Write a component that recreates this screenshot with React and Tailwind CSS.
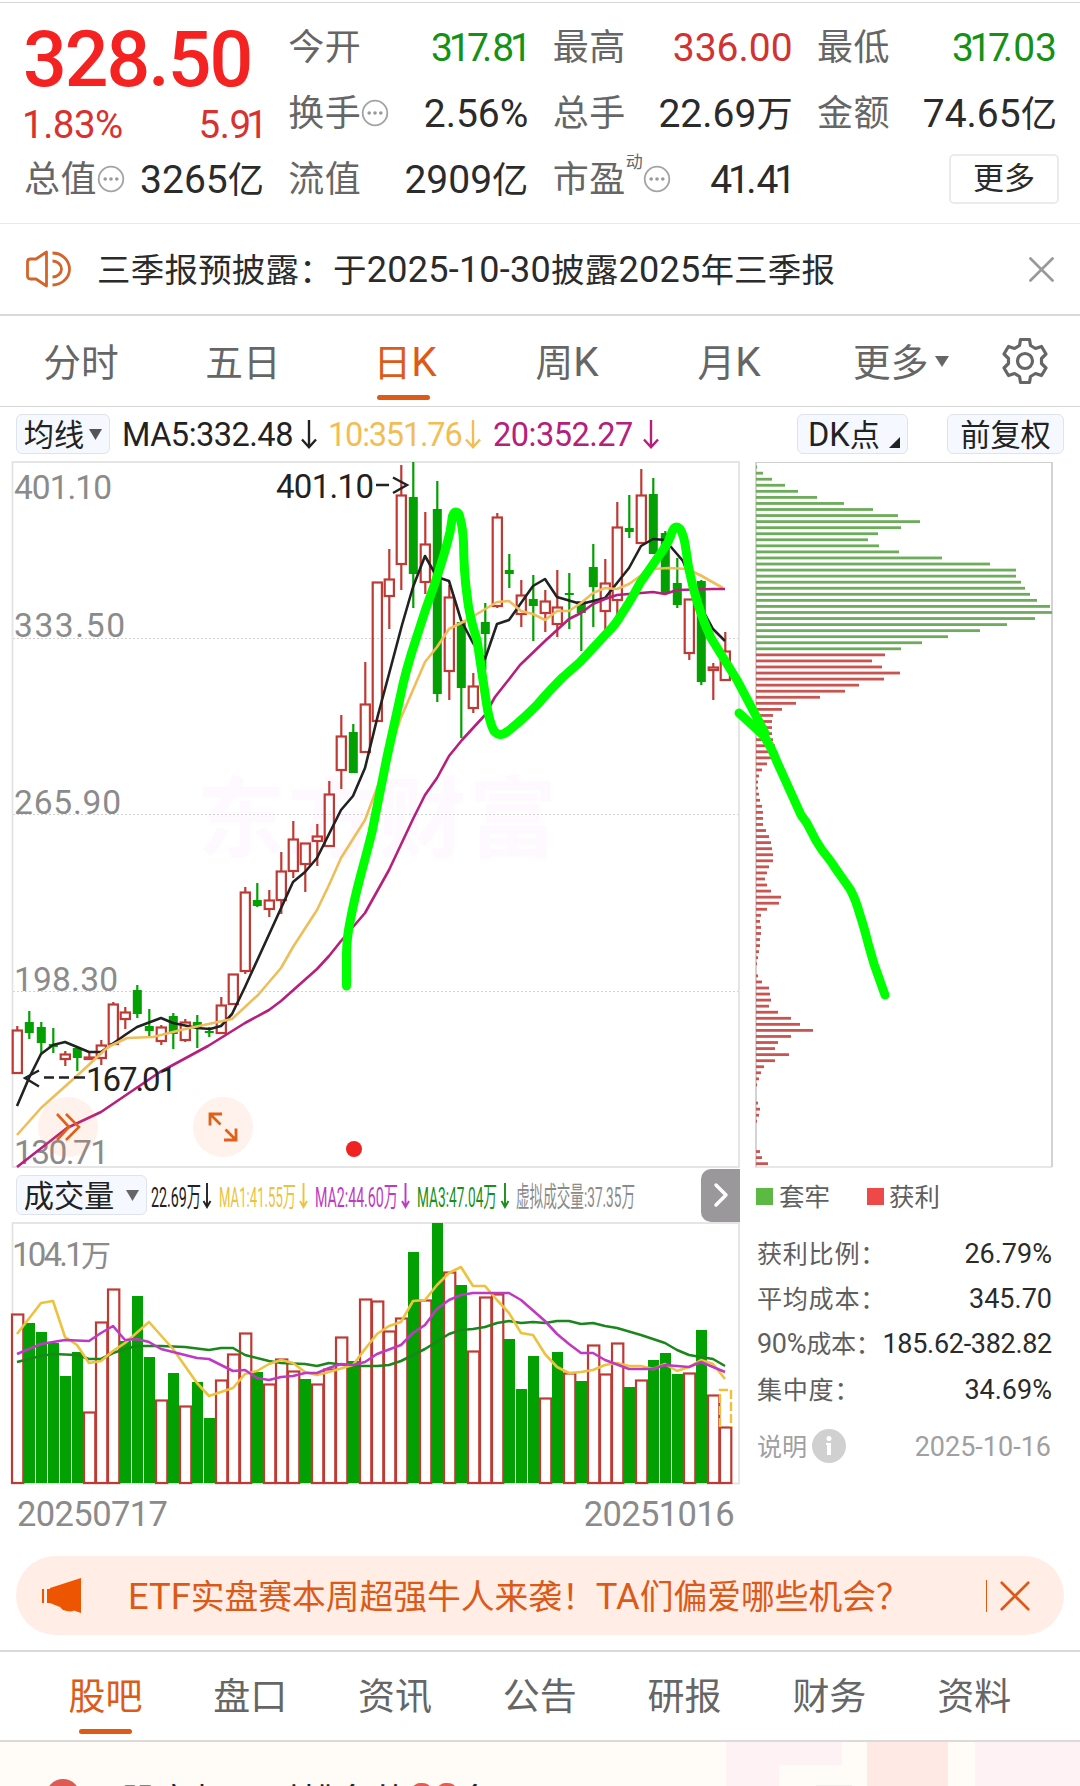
const UP = '#bf3a35'
const DOWN = '#03a003'

// direction, body top, body bottom, high, low
const candles = [
['r',1030,1073,1026,1073],['g',1022,1033,1011,1039],['g',1027,1043,1022,1053],['g',1044,1047,1028,1053],['r',1054,1059,1051,1066],
['g',1048,1058,1048,1071],['r',1057,1059,1052,1059],['r',1045,1058,1040,1065],['r',1004,1044,1002,1044],['r',1012,1019,1007,1029],
['g',990,1014,985,1018],['g',1026,1031,1009,1036],['r',1027,1041,1025,1045],['g',1016,1034,1013,1049],['r',1022,1040,1019,1042],
['g',1022,1027,1015,1048],['g',1031,1033,1027,1037],['r',1005,1033,997,1033],['r',974,1004,974,1004],['r',892,971,887,974],
['g',900,906,883,907],['r',900,909,890,917],['r',871,900,852,914],['r',839,871,821,878],['r',843,864,843,892],
['r',836,841,824,866],['r',794,846,781,846],['r',736,770,715,789],['g',732,773,724,773],['r',704,752,662,752],
['r',582,721,582,721],['r',579,596,549,629],['r',495,564,465,590],['g',497,574,462,608],['r',544,582,512,594],
['g',509,694,481,702],['r',597,671,585,700],['g',622,688,622,738],['r',686,708,673,713],['g',622,634,603,670],
['r',517,606,513,608],['g',570,574,554,588],['r',595,614,580,627],['g',599,606,575,641],['r',601,613,590,632],
['r',607,624,570,637],['g',593,595,573,629],['g',601,613,601,651],['g',567,587,544,627],['r',583,611,559,630],
['r',527,600,502,617],['g',528,532,495,538],['r',495,543,469,543],['g',494,554,478,554],['g',533,593,531,593],
['g',583,605,558,608],['r',599,653,599,660],['g',581,682,580,685],['r',667,670,663,700],['r',651,680,632,681],
]

const volumes = [
1314,1323,1332,1343,1376,1352,1412,1322,1289,1341,1296,1357,1400,1373,1406,1382,1418,1380,1354,1333,
1372,1384,1359,1371,1379,1384,1369,1337,1361,1299,1301,1331,1318,1252,1300,1223,1272,1285,1351,1297,
1294,1339,1389,1356,1398,1352,1373,1381,1345,1374,1343,1387,1380,1360,1353,1374,1373,1330,1395,1427,
]
const falling = new Set([1, 2, 3, 4, 5, 9, 10, 11, 13, 15, 16, 20, 24, 28, 33, 35, 37, 41, 42, 43, 45, 47, 51, 53, 54, 55, 57])

// cost distribution, one value per price level; the first 31 are trapped chips
const chips = [
1,7,16,29,42,61,88,117,142,164,145,122,112,123,143,186,234,260,260,265,269,274,281,294,296,279,251,224,192,166,145,
129,116,126,144,128,103,89,64,40,26,17,16,16,16,17,19,20,16,11,6,3,2,2,3,4,6,7,7,7,10,13,15,16,17,17,13,11,9,11,15,25,23,11,
5,4,5,5,4,4,3,2,1,0,2,6,13,14,15,13,22,35,44,57,35,22,19,33,19,8,5,3,1,0,0,2,4,3,1,0,0,0,0,4,6,12,
]

const ma5 = '17,1106 29,1078 41,1054 53,1045 65,1042 89,1052 101,1052 125,1035 137,1027 161,1018 173,1023 197,1028 210,1029 221,1026 232,1014 245,987 293,882 305,872 317,858 341,810 353,796 365,768 378,715 389,674 402,625 413,587 425,556 437,577 449,581 461,620 473,643 485,659 497,624 509,620 533,586 545,579 557,597 581,604 605,598 629,568 641,546 653,539 665,540 683,561 701,607 713,629 725,641'
const ma10 = '17,1135 41,1108 80,1073 108,1047 127,1038 153,1037 185,1029 232,1019 258,995 281,968 293,947 317,910 329,885 341,858 365,820 380,780 400,720 425,662 437,647 449,629 467,620 497,602 509,601 521,611 533,614 545,620 557,611 569,611 581,603 593,593 605,588 617,589 629,584 643,574 653,569 668,568 687,569 700,575 723,588'
const ma20 = '17,1167 67,1128 101,1112 160,1072 208,1046 245,1023 269,1010 281,1001 317,969 329,956 341,941 365,913 389,870 413,819 425,795 437,778 449,756 462,740 485,715 495,697 510,678 520,665 545,641 557,630 569,619 581,613 593,604 605,599 617,595 641,593 653,592 665,594 677,590 713,589 725,589'

const vol1 = '17,1334 41,1303 53,1301 65,1337 77,1345 89,1363 101,1361 113,1351 125,1343 149,1322 173,1349 185,1366 197,1383 209,1396 221,1392 233,1388 245,1374 257,1371 269,1364 281,1360 293,1363 305,1372 317,1375 329,1372 353,1365 365,1349 377,1334 389,1326 401,1322 413,1301 425,1300 437,1285 449,1273 461,1267 473,1286 485,1286 497,1300 509,1313 521,1333 533,1335 545,1354 557,1367 569,1373 581,1372 593,1370 605,1365 617,1363 629,1366 641,1366 653,1369 665,1364 677,1371 689,1367 701,1360 713,1364 725,1379'
const vol2 = '17,1354 41,1344 65,1340 89,1341 101,1333 113,1326 125,1340 137,1339 149,1342 161,1349 197,1358 209,1359 221,1365 233,1371 245,1370 257,1378 269,1380 281,1377 293,1376 305,1373 317,1373 329,1368 341,1364 353,1365 365,1362 377,1354 401,1345 413,1333 425,1325 437,1309 449,1300 461,1295 473,1293 509,1293 521,1300 545,1321 557,1334 569,1344 581,1353 593,1353 605,1360 629,1369 653,1369 665,1365 689,1367 701,1362 725,1372'
const vol3 = '17,1362 41,1356 53,1354 77,1355 89,1359 101,1359 113,1353 125,1349 137,1346 161,1346 185,1347 209,1350 221,1348 233,1348 245,1355 269,1361 281,1363 305,1364 317,1366 329,1363 353,1366 377,1366 389,1365 401,1361 425,1349 449,1334 461,1330 473,1329 485,1327 497,1323 509,1321 521,1323 533,1322 545,1323 557,1321 569,1321 581,1324 593,1323 605,1326 617,1328 641,1335 653,1339 665,1343 677,1350 689,1355 701,1357 713,1359 725,1366'

const cx = i => 17.3 + i * 12

// digits stand taller than the hanzi beside them
function Mix({ children }) {
return children.split(/([\u3000-\u9fff\uff00-\uffef]+)/).map((s, i) => i % 2 ? <span key={i} className="text-[0.93em]">{s}</span> : s)
}

// proportional figures: a narrow 1, and a point tucked under the 7
function Num({ children }) {
return children.split(/(1|7(?=\.)|[\u3000-\u9fff]+)/).map((s, i) => {
if (s === '1') return <span key={i} className="-mr-[0.09em] -ml-[0.11em]">1</span>
if (s === '7') return <span key={i} className="-mr-[0.18em]">7</span>
return i % 2 ? <span key={i} className="text-[0.93em]">{s}</span> : s
})
}

function Dots() {
return (
<svg width="28" height="28" viewBox="0 0 28 28" fill="none" className="shrink-0">
<circle cx="14" cy="14" r="12.3" stroke="#a3a3a3" strokeWidth="1.8" />
<circle cx="8.2" cy="14" r="1.8" fill="#999" /><circle cx="14" cy="14" r="1.8" fill="#999" /><circle cx="19.8" cy="14" r="1.8" fill="#999" />
</svg>
)
}

function Stat({ label, value, dots, sup, color = 'text-[#2b2b2b]' }) {
return (
<div className="flex h-[66px] items-center justify-between">
<div className="flex items-center">
<span className="pt-[2px] text-[36px] tracking-[0.5px] text-[#666]">{label}</span>
{sup && <span className="-mt-[32px] text-[17px] text-[#666]">{sup}</span>}
{dots && <Dots />}
</div>
<span className={'pt-[2px] text-[39px] ' + color}><Num>{value}</Num></span>
</div>
)
}

function Close({ size, color, width }) {
return (
<svg width={size} height={size} viewBox="0 0 26 26" stroke={color} strokeWidth={width} strokeLinecap="round">
<path d="M1.5 1.5 24.5 24.5M24.5 1.5 1.5 24.5" />
</svg>
)
}

function Down() {
return (
<svg width="16" height="29" viewBox="0 0 16 29" fill="none" stroke="currentColor" strokeWidth="2.4" className="shrink-0">
<path d="M8 0V27M1 19.5 8 27.2 15 19.5" />
</svg>
)
}

function Header() {
return (
<section className="flex h-[221px] justify-between border-b border-[#e9e9e9] pr-[23px] pl-[24px] pt-[11px]">
<div className="w-[240px]">
<div className="-ml-[1px] h-[77px] pt-[8px] text-[77px] leading-[77px] font-medium tracking-[-2px] text-[#f52222]">328.50</div>
<div className="-ml-[2px] flex h-[55px] items-end justify-between text-[38.5px] leading-[43px] tracking-[-0.5px] text-[#d93030]"><span>1.83%</span><span><Num>5.91</Num></span></div>
<Stat label="总值" dots value="3265亿" />
</div>
<div className="w-[240px]">
<Stat label="今开" value="317.81" color="text-[#159215]" />
<Stat label="换手" dots value="2.56%" />
<Stat label="流值" value="2909亿" />
</div>
<div className="w-[240px]">
<Stat label="最高" value="336.00" color="text-[#d23232]" />
<Stat label="总手" value="22.69万" />
<Stat label="市盈" sup="动" dots value="41.41" />
</div>
<div className="w-[240px]">
<Stat label="最低" value="317.03" color="text-[#159215]" />
<Stat label="金额" value="74.65亿" />
<div className="flex h-[66px] items-center justify-end">
<button className="-mr-[2px] flex h-[50px] w-[110px] items-center justify-center rounded-[5px] border-2 border-[#ebebeb] text-[31px] text-[#2b2b2b]">更多</button>
</div>
</div>
</section>
)
}

function Notice() {
return (
<section className="flex h-[92px] items-center border-b-2 border-[#dadada] pr-[26px] pl-[25px]">
<svg width="46" height="38" viewBox="0 0 46 38" fill="none" stroke="#d4652a" strokeWidth="2.8" strokeLinejoin="round">
<path d="M2.5 12Q2.5 9 5.5 9H11L21.5 2V36L11 29H5.5Q2.5 29 2.5 26Z" />
<path d="M27.500 3A17 16 0 0 1 27.500 35M27.500 11A9 8 0 0 1 27.500 27" />
</svg>
<span className="ml-[26px] flex-1 pt-[2px] text-[36px] tracking-[0.250px] whitespace-nowrap text-[#2b2b2b]"><Mix>三季报预披露：于2025-10-30披露2025年三季报</Mix></span>
<Close size={25} color="#999" width="2.8" />
</section>
)
}

function Gear() {
return (
<svg width="46" height="48" viewBox="0 0 46 48" fill="none" stroke="#666" strokeWidth="3.2" strokeLinejoin="round">
<path d="M18.500 2.500H27.500L28.500 8.500L33.500 11.500L39.500 9.500L44 17L39.500 21.500V26.500L44 31L39.500 38.500L33.500 36.500L28.500 39.500L27.500 45.500H18.500L17.500 39.500L12.500 36.500L6.500 38.500L2 31L6.500 26.500V21.500L2 17L6.500 9.500L12.500 11.500L17.500 8.500Z" />
<circle cx="23" cy="24" r="7.500" />
</svg>
)
}

function Tabs() {
return (
<nav className="flex h-[91px] items-center border-b border-[#d6d6d6] text-[40.500px] text-[#666]">
{['分时', '五日', '日K', '周K', '月K'].map(t => (
<div key={t} className={t === '日K' ? 'relative flex h-full w-[162px] items-center justify-center text-[#dc5b17]' : 'flex h-full w-[162px] items-center justify-center'}>
<span className="pt-[3px]"><Mix>{t}</Mix></span>
{t === '日K' && <i className="absolute bottom-[6px] left-[53px] h-[5px] w-[53px] rounded-full bg-[#dc5b17]" />}
</div>
))}
<div className="ml-[43px] flex items-center gap-[7px]"><span className="pt-[3px]"><Mix>更多</Mix></span><svg width="14" height="11"><path d="M0 0H14L7 11Z" fill="#666" /></svg></div>
<div className="ml-[53px]"><Gear /></div>
</nav>
)
}

function MaBar() {
return (
<div className="flex h-[54px] items-center pr-[16px] pl-[16px] text-[32.500px] text-[#222]">
<button className="flex h-[40px] w-[94px] items-center justify-center gap-[5px] rounded-[6px] border border-[#dfe3ea] bg-[#f5f9ff]"><span className="pt-[3px]"><Mix>均线</Mix></span><svg width="13" height="11"><path d="M0 0H13L6.500 11Z" fill="#555" /></svg></button>
<span className="ml-[12px] flex w-[206px] items-center justify-between pr-[11px] tracking-[-0.500px]"><span className="pt-[3px]">MA5:332.48</span><Down /></span>
<span className="flex w-[165px] items-center justify-between pr-[12px] tracking-[-1.200px] text-[#f3bd54]"><span className="pt-[3px]">10:351.76</span><Down /></span>
<span className="flex w-[166px] items-center justify-between tracking-[-0.500px] text-[#b4207c]"><span className="pt-[3px]">20:352.27</span><Down /></span>
<button className="ml-auto flex h-[40px] w-[111px] items-center rounded-[6px] border border-[#dfe3ea] bg-[#f5f9ff] pl-[10px]"><span className="pt-[3px]"><Mix>DK点</Mix></span><svg width="11" height="11" className="mt-[17px] ml-[9px]"><path d="M11 0V11H0Z" fill="#222" /></svg></button>
<button className="ml-[39px] flex h-[40px] w-[117px] items-center justify-center rounded-[6px] border border-[#dfe3ea] bg-[#f5f9ff] pt-[3px]"><Mix>前复权</Mix></button>
</div>
)
}

function KLine() {
return (
<svg width="728" height="707" viewBox="12 461 728 707" fill="none" className="block overflow-visible">
<text x="197" y="850" textLength="360" fontSize="88" fontWeight="700" fill="#fef9fe">东方财富</text>
<path d="M13 638.500H739M13 814.500H739M13 991.500H739" stroke="#d2d2d2" strokeDasharray="2 2" />
<rect x="12.500" y="462" width="726.500" height="705" stroke="#e3e3e3" strokeWidth="1.800" />
<g fontSize="33.500" fill="#8b8b8b">
<text x="14" y="499" textLength="98">401.10</text>
<text x="14" y="637" textLength="111">333.50</text>
<text x="14" y="814" textLength="107">265.90</text>
<text x="14" y="991" textLength="104">198.30</text>
<text x="14" y="1164" textLength="95">130.71</text>
</g>
{candles.map(([d, top, bottom, high, low], i) => (
<g key={i}>
<path d={`M${cx(i)} ${high}V${top}M${cx(i)} ${bottom}V${low}`} stroke={d === 'r' ? UP : DOWN} strokeWidth="2.200" />
{d === 'r'
? <rect x={cx(i) - 4.6} y={top + .5} width="9.200" height={Math.max(bottom - top - .5, 1)} stroke={UP} strokeWidth="2.200" />
: <rect x={cx(i) - 4.5} y={top} width="9" height={bottom - top} fill={DOWN} />}
</g>
))}
<g strokeWidth="2.600" strokeLinejoin="round">
<polyline points={ma5} stroke="#222" />
<polyline points={ma10} stroke="#f0bd5b" />
<polyline points={ma20} stroke="#b61f7d" />
</g>
<g fontSize="33" fill="#222" stroke="none">
<text x="276" y="498" textLength="98">401.10</text>
<text x="86" y="1091" textLength="91">167.01</text>
</g>
<path d="M376 485H389M393 477.500 407 485 393 493M39 1070.500 25 1078 39 1086.500M44 1077.500H54M59 1077.500H69M74 1077.500H85" stroke="#222" strokeWidth="2.400" />
<circle cx="354" cy="1149" r="8" fill="#f12222" />
</svg>
)
}

function Volume() {
return (
<svg width="728" height="263" viewBox="12 1222 728 263" fill="none" className="block overflow-visible">
<rect x="12.500" y="1223" width="726.500" height="260.500" stroke="#e3e3e3" strokeWidth="1.800" />
<text x="12" y="1266" fontSize="33" fill="#8b8b8b" textLength="99">104.1<tspan fontSize="30">万</tspan></text>
{volumes.map((y, i) => falling.has(i)
? <rect key={i} x={cx(i) - 5.3} y={y} width="11" height={1483 - y} fill={DOWN} />
: <rect key={i} x={cx(i) - 5.3} y={y + .5} width="11.300" height={1482.5 - y} fill="#fff" stroke={UP} strokeWidth="2.200" />)}
<path d="M720 1427V1390H731V1427" stroke="#efc03c" strokeWidth="2.400" strokeDasharray="9 3" />
<g strokeWidth="2.600" strokeLinejoin="round">
<polyline points={vol3} stroke="#1b861b" />
<polyline points={vol1} stroke="#ecc23f" />
<polyline points={vol2} stroke="#bf3ac3" />
</g>
</svg>
)
}

const legend = [
[151, 50, '22.69万', '#222', 207],
[219, 77, 'MA1:41.55万', '#ecc23f', 303.5],
[315, 83, 'MA2:44.60万', '#bf3ac3', 405.5],
[417, 80, 'MA3:47.04万', '#1b8f1b', 505],
[516, 119, '虚拟成交量:37.35万', '#8b8b8b', 0],
]

function VolumeBar() {
return (
<div className="flex h-[54px] items-center pl-[4px]">
<button className="flex h-[40px] w-[131px] items-center justify-center gap-[12px] rounded-[6px] border border-[#dfe3ea] bg-[#f5f9ff] text-[32.500px] text-[#222]"><span className="pt-[3px]"><Mix>成交量</Mix></span><svg width="13" height="11"><path d="M0 0H13L6.500 11Z" fill="#666" /></svg></button>
<svg width="554" height="54" viewBox="147 1168 554 54" fill="none">
{legend.map(([x, w, t, c, arrow]) => (
<g key={t}>
<text x={x} y="1206.500" fontSize="28.500" fill={c} textLength={w} lengthAdjust="spacingAndGlyphs">{t}</text>
{arrow > 0 && <path d={`M${arrow} 1183V1207M${arrow - 3.5} 1201L${arrow} 1207L${arrow + 3.5} 1201`} stroke={c} strokeWidth="1.900" />}
</g>
))}
</svg>
<button className="flex h-[53px] w-[39px] items-center justify-center rounded-l-[10px] bg-[#9b989b]">
<svg width="16" height="26" viewBox="0 0 16 26" fill="none" stroke="#fff" strokeWidth="3.500" strokeLinecap="round" strokeLinejoin="round"><path d="M3 3 13 13 3 23" /></svg>
</button>
</div>
)
}

function Chips() {
return (
<svg width="298" height="707" viewBox="755 461 298 707" fill="none" className="block">
<path d="M755 462.500H1052M755 1167H1052" stroke="#cfcfcf" />
<path d="M756 462V1167M1052 462V1167" stroke="#cfcfcf" strokeWidth="1.800" />
{chips.map((w, i) => w > 0 && <rect key={i} x="756" y={465.7 + i * 6.057} width={w} height="2.800" fill={i < 31 ? '#6dac5b' : '#c95553'} />)}
</svg>
)
}

function CostRow({ label, value }) {
return (
<div className="flex h-[45.300px] items-center justify-between pt-[1px] text-[27px]">
<span className="tracking-[0.700px] text-[#5f5f5f]"><Mix>{label}</Mix></span>
<span className="pr-[1px] text-[#2b2b2b]">{value}</span>
</div>
)
}

function CostPanel() {
return (
<div className="flex w-[298px] flex-col">
<Chips />
<div className="flex h-[56px] items-center pl-[1px] text-[25.500px] text-[#5f5f5f]">
<i className="mr-[6px] size-[17px] bg-[#5bb944]" /><span className="pt-[2px]">套牢</span>
<i className="mr-[5px] ml-[37px] size-[17px] bg-[#ee4848]" /><span className="pt-[2px]">获利</span>
</div>
<div className="pt-[7px] pl-[2px]">
<CostRow label="获利比例：" value="26.79%" />
<CostRow label="平均成本：" value="345.70" />
<div className="flex h-[45.300px] items-center justify-between pt-[1px] text-[27px] whitespace-nowrap">
<span className="w-[112px] tracking-[-0.300px] text-[#5f5f5f]"><Mix>90%成本：</Mix></span>
<span className="pr-[1px] tracking-[-0.300px] text-[#2b2b2b]">185.62-382.82</span>
</div>
<CostRow label="集中度：" value="34.69%" />
<div className="mt-[10px] flex h-[48px] items-center text-[27px] text-[#a0a0a0]">
<span className="pt-[2px]"><Mix>说明</Mix></span>
<svg width="34" height="34" viewBox="0 0 34 34" className="ml-[5px]"><circle cx="17" cy="17" r="17" fill="#d0d0d0" /><circle cx="17" cy="9.500" r="2.500" fill="#fff" /><path d="M14 14H19V26H15V16H14Z" fill="#fff" /></svg>
<span className="ml-auto pt-[2px] pr-[2px]">2025-10-16</span>
</div>
</div>
</div>
)
}

// hand drawn trend line over both charts
function Scribble() {
return (
<svg width="1080" height="707" viewBox="0 461 1080 707" fill="none" stroke="#00ff00" strokeWidth="9" strokeLinecap="round" strokeLinejoin="round" className="pointer-events-none absolute top-0 left-0">
<path d="M346.500 986V953Q347 936 350 922Q354 900 361 874Q368 848 372 832L387 757L400 698Q405 672 417 636Q425 610 435 583Q445 553 450 532L452.500 516Q455 509 459 514Q463 527 463.500 543Q464 574 467 595Q469 616 477 640L486 700Q489 722 494 731Q500 738 508 731Q520 722 537 705Q548 692 563 677L580 662L607 633Q616 624 621 615Q630 602 640 583L663 550Q669 542 672 532Q675 524 680 529Q684 535 686 550Q688 568 693 587Q701 617 711 638L737 680L765 733" />
<path d="M739 713 763 735Q771 746 777 762L801 815Q807 822 811 831Q815 840 822 850Q831 861 838 872L850 889Q856 900 860 915Q864 927 868 943L874 964L885 995" />
</svg>
)
}

function Charts() {
return (
<section className="relative flex h-[1095px] pl-[12px]">
<div className="mr-[15px] w-[728px]">
<KLine />
<VolumeBar />
<Volume />
<div className="flex h-[60px] items-center justify-between pr-[6px] pl-[5px] text-[34.500px] tracking-[-0.600px] text-[#8b8b8b]"><span>20250717</span><span>20251016</span></div>
</div>
<CostPanel />
<div className="absolute top-[636px] left-[38px] flex size-[60px] items-center justify-center rounded-full bg-[#ff7640]/10">
<svg width="26" height="28" viewBox="0 0 26 28" fill="none" stroke="#e06018" strokeWidth="2.600"><path d="M2 1 14 14 2 27M11 1 24 14 11 27" /></svg>
</div>
<div className="absolute top-[636px] left-[193px] flex size-[60px] items-center justify-center rounded-full bg-[#ff7640]/10">
<svg width="30" height="30" viewBox="0 0 30 30" fill="none" stroke="#e06018" strokeWidth="2.800"><path d="M2 13.500V2H14M2 2 12.500 12.500M28 16.500V28H16M28 28 17.500 17.500" /></svg>
</div>
<Scribble />
</section>
)
}

function Banner() {
return (
<section className="mx-[16px] flex h-[79px] items-center rounded-full bg-[#ffede6] pr-[34px] pl-[26px] text-[#dc5a18]">
<svg width="40" height="35" viewBox="0 0 40 35" fill="#ee5500"><path d="M0 11H2V25H0ZM5 11H8V25H5ZM8 10 39 0V35L32 32.500Q29 34 25 33L21 32L18 29L8 25Z" /></svg>
<span className="ml-[46px] flex-1 pt-[3px] text-[36.300px] whitespace-nowrap"><Mix>ETF实盘赛本周超强牛人来袭！TA们偏爱哪些机会？</Mix></span>
<i className="mr-[13px] h-[32px] w-px bg-[#dc5a18]" />
<Close size={30} color="#dc5a18" width="2.300" />
</section>
)
}

function BottomTabs() {
return (
<nav className="mt-[15px] flex h-[92px] items-center border-t-2 border-b-2 border-[#dadada] pl-[33px] text-[37px] text-[#666]">
{['股吧', '盘口', '资讯', '公告', '研报', '财务', '资料'].map((t, i) => (
<div key={t} className={i === 0 ? 'relative flex h-full w-[144.800px] items-center justify-center text-[#dc5b17]' : 'flex h-full w-[144.800px] items-center justify-center'}>
<span className="pt-[3px]">{t}</span>
{i === 0 && <i className="absolute bottom-[6px] left-[46px] h-[5px] w-[53px] rounded-full bg-[#dc5b17]" />}
</div>
))}
</nav>
)
}

function Feed() {
return (
<section className="relative flex h-[44px] overflow-hidden bg-[#fffcf7]">
<svg width="360" height="44" className="absolute top-0 right-0"><path d="M6 0H122V23H59V44H6ZM255 0H360V44H255Z" fill="#fff2f5" /><path d="M147 0H228V44H147ZM96 43H132V44H96Z" fill="#ffe9e4" /></svg>
<i className="mt-[37px] ml-[46px] size-[34px] rounded-full bg-[#dd5a55]" />
<span className="mt-[38px] ml-[41px] text-[36px] leading-[40px] whitespace-nowrap text-[#222]">股市相即时排名的<b className="text-[44px] leading-[40px] text-[#ee5a4a]">22</b>名</span>
</section>
)
}

export default function App() {
return (
<div className="h-[1786px] w-[1080px] overflow-hidden bg-white pt-[2px] font-['Roboto','Noto_Sans_CJK_SC',sans-serif]">
<div className="border-t border-[#d6d6d6]">
<Header />
<Notice />
<Tabs />
<MaBar />
<Charts />
<Banner />
<BottomTabs />
<Feed />
</div>
</div>
)
}
